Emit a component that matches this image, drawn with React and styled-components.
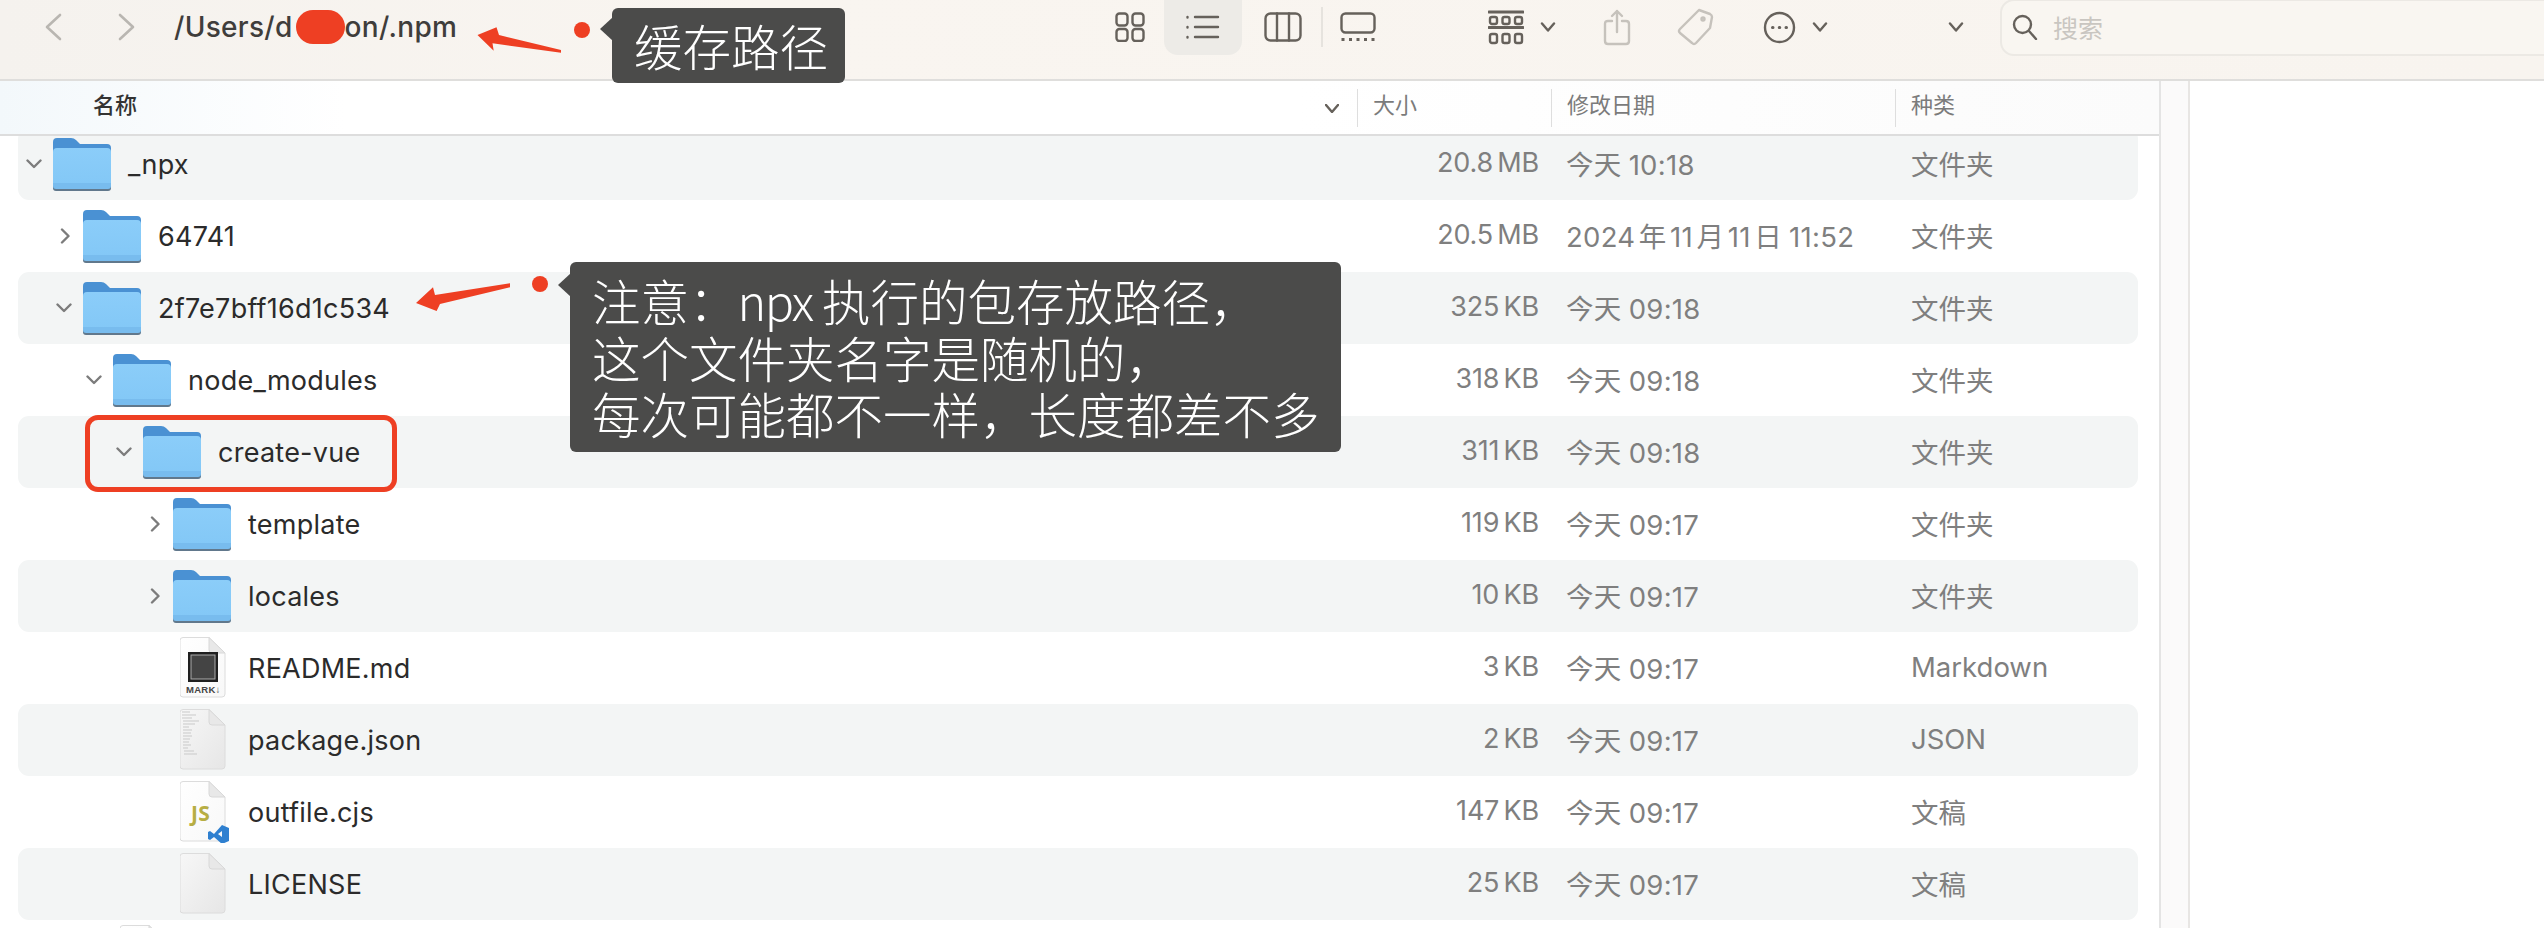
import React from 'react';
import styled, { createGlobalStyle } from 'styled-components';

const RED = '#ee3f23';
const CJK = '"Noto Sans CJK SC"';

const GlobalStyle = createGlobalStyle`
  html, body {
    margin: 0;
    padding: 0;
    background: #fff;
  }
  body {
    font-family: Inter, ${CJK}, sans-serif;
  }
`;

const Page = styled.div`
  position: relative;
  width: 2544px;
  height: 928px;
  overflow: hidden;
  background: #fff;
`;

/* toolbar */
const Toolbar = styled.div`
  display: flex;
  align-items: center;
  box-sizing: border-box;
  height: 81px;
  padding-bottom: 25px;
  background: linear-gradient(90deg, #f5f2ee 0%, #f9f5f0 30%, #f8f4ef 100%);
  border-bottom: 2px solid #dfdedc;
`;

const NavArea = styled.div`
  display: flex;
  align-items: center;
  flex: 0 0 1115px;
  padding-left: 45px;
  box-sizing: border-box;
`;

const NavButton = styled.svg`
  flex: none;
  width: 17px;
  height: 28px;
  margin-right: ${(p) => p.$mr}px;
  fill: none;
  stroke: #b9b6b1;
  stroke-width: 2.6;
  stroke-linecap: round;
  stroke-linejoin: round;
`;

const PathText = styled.div`
  display: flex;
  align-items: center;
  font-size: 28px;
  font-weight: 500;
  letter-spacing: 0.3px;
  color: #3f3d3b;
  white-space: nowrap;
`;

const RedactBlob = styled.span`
  display: inline-block;
  width: 49px;
  height: 34px;
  margin: 0 0 0 ${(p) => p.$gap}px;
  border-radius: 17px;
  background: ${RED};
`;

const Tool = styled.svg`
  flex: none;
  width: ${(p) => p.$w}px;
  height: ${(p) => p.$h}px;
  margin-left: ${(p) => p.$ml || 0}px;
  fill: none;
  stroke: ${(p) => (p.$dim ? '#c6c2bc' : '#66615b')};
  stroke-width: 2.4;
  stroke-linecap: round;
  stroke-linejoin: round;
`;

const ActiveTool = styled.div`
  display: flex;
  align-items: center;
  justify-content: center;
  flex: none;
  width: 78px;
  height: 56px;
  margin-left: 19px;
  background: #edebe7;
  border-radius: 0 0 14px 14px;
`;

const Separator = styled.div`
  flex: none;
  width: 2px;
  height: 40px;
  margin-left: 19px;
  background: #e6e3de;
`;

const SearchBox = styled.div`
  display: flex;
  align-items: center;
  flex: 1;
  height: 53px;
  margin: 0 -20px 0 36px;
  padding-left: 10px;
  border: 2px solid #ece9e4;
  border-radius: 14px;
  background: #f9f6f1;
`;

const SearchLabel = styled.span`
  margin-left: 15px;
  font-size: 25px;
  color: #c9c6c1;
`;

/* table */
const Content = styled.div`
  display: flex;
  height: 847px;
`;

const TablePane = styled.div`
  display: flex;
  flex-direction: column;
  flex: 0 0 2159px;
  min-width: 0;
`;

const HeaderRow = styled.div`
  display: grid;
  grid-template-columns: 1357px 194px 344px 1fr;
  align-items: center;
  box-sizing: border-box;
  height: 55px;
  flex: none;
  background: linear-gradient(90deg, #f3f8fb 0%, #ffffff 16%, #ffffff 60%, #fbfbfb 100%);
  border-bottom: 2px solid #dddddd;
`;

const NameHeader = styled.div`
  display: flex;
  align-items: flex-start;
  justify-content: space-between;
  height: 38px;
  padding: 0 18px 0 93px;
  font-size: 22px;
  font-weight: 500;
  line-height: 32px;
  color: #333;

  svg {
    margin-top: 15px;
  }
`;

const ColumnHeader = styled.div`
  height: 38px;
  padding-left: 15px;
  border-left: 1px solid #dedede;
  font-size: 22px;
  line-height: 32px;
  color: #7b7b7b;
`;

const RowList = styled.div`
  flex: 1;
  min-height: 0;
  overflow: hidden;
`;

const RowStack = styled.div`
  margin: -8px 21px 0 18px;
`;

const Row = styled.div`
  display: grid;
  grid-template-columns: 1339px 182px 372px 1fr;
  align-items: center;
  height: 72px;
  border-radius: 11px;
  background: ${(p) => (p.$striped ? '#f3f5f5' : 'transparent')};
`;

const NameCell = styled.div`
  display: flex;
  align-items: center;
  padding-left: ${(p) => 8 + p.$level * 30}px;
  font-size: 27px;
  letter-spacing: 0.25px;
  color: #2b2b2b;
`;

const ChevronSlot = styled.svg`
  flex: none;
  width: 16px;
  height: 16px;
  margin-right: 11px;
  fill: none;
  stroke: #7c7c7c;
  stroke-width: 2.4;
  stroke-linecap: round;
  stroke-linejoin: round;
`;

const IconSlot = styled.div`
  display: flex;
  justify-content: center;
  flex: none;
  width: 58px;
  margin-right: 17px;
`;

const SizeCell = styled.div`
  padding-bottom: 3px;
  font-size: 27px;
  letter-spacing: -0.2px;
  word-spacing: -3px;
  text-align: right;
  color: #7f7f7f;
`;

const DateCell = styled.div`
  padding: 0 0 3px 27px;
  font-size: 27.5px;
  letter-spacing: 0.3px;
  word-spacing: -1px;
  text-autospace: normal;
  color: #7f7f7f;
`;

const KindCell = styled.div`
  padding-bottom: 3px;
  font-size: 27.5px;
  color: #7f7f7f;
`;

const ScrollTrack = styled.div`
  flex: 0 0 27px;
  background: #fbfafa;
  border-left: 2px solid #e4e4e4;
  border-right: 2px solid #e8e6e4;
`;

/* annotations lying over the window */
const Callout = styled.div`
  position: absolute;
  left: ${(p) => p.$left}px;
  top: ${(p) => p.$top}px;
  box-sizing: border-box;
  padding: ${(p) => p.$pad};
  background: #4b4b4a;
  border-radius: 6px;
  color: #fff;
  font-family: ${CJK}, sans-serif;
  font-size: 48.5px;
  font-weight: 300;
  white-space: pre;
  line-height: ${(p) => p.$lh}px;

  &::before {
    content: '';
    position: absolute;
    left: -12px;
    top: ${(p) => p.$notch}px;
    border-top: 12px solid transparent;
    border-bottom: 12px solid transparent;
    border-right: 13px solid #4b4b4a;
  }
`;

const NarrowLatin = styled.span`
  letter-spacing: -1.5px;
`;

const RedDot = styled.div`
  position: absolute;
  left: ${(p) => p.$left}px;
  top: ${(p) => p.$top}px;
  width: 16px;
  height: 16px;
  border-radius: 50%;
  background: ${RED};
`;

const ArrowMark = styled.svg`
  position: absolute;
  left: ${(p) => p.$left}px;
  top: ${(p) => p.$top}px;
  fill: ${RED};
`;

const HighlightBox = styled.div`
  position: absolute;
  left: 85px;
  top: 415px;
  width: 312px;
  height: 77px;
  box-sizing: border-box;
  border: 5px solid ${RED};
  border-radius: 13px;
`;

const Chevron = ({ open }) => (
  <ChevronSlot viewBox="0 0 16 16">
    {open ? <path d="M1.500 4.500 8 11l6.500-6.500" /> : <path d="M6 1.500 12.500 8 6 14.500" />}
  </ChevronSlot>
);

const Folder = () => (
  <svg width="58" height="53" viewBox="0 0 58 53">
    <defs>
      <linearGradient id="folderFront" x1="0" y1="0" x2="0" y2="1">
        <stop offset="0" stopColor="#8bcdf9" />
        <stop offset="1" stopColor="#82c7f6" />
      </linearGradient>
    </defs>
    <path d="M0 50V4q0-4 4-4h14q3 0 5 2l4 4h27q4 0 4 4v40z" fill="#4a91d3" />
    <path d="M0 14q0-4 4-4h50q4 0 4 4v35q0 3-3 3H3q-3 0-3-3z" fill="url(#folderFront)" />
    <path d="M0 45h58v4q0 3-3 3H3q-3 0-3-3z" fill="#78bcee" />
    <path d="M0 48q0 3 3 3h52q3 0 3-3v2q0 3-3 3H3q-3 0-3-3z" fill="#61788c" />
  </svg>
);

const FileIcon = ({ kind }) => (
  <svg width="50" height="62" viewBox="0 0 50 62" style={{ marginLeft: 5 }}>
    <defs>
      <linearGradient id={`page-${kind}`} x1="0" y1="0" x2="1" y2="1">
        <stop offset="0" stopColor={kind === 'blank' || kind === 'json' ? '#f7f7f7' : '#ffffff'} />
        <stop offset="1" stopColor={kind === 'blank' || kind === 'json' ? '#e6e6e6' : '#f8f8f8'} />
      </linearGradient>
    </defs>
    <path d="M3 .5h26L45 16v41q0 3-3 3H3q-3 0-3-3V3.500q0-3 3-3z" fill={`url(#page-${kind})`} stroke="#dcdcdc" />
    <path d="M29 .5V13q0 3 3 3h13z" fill="#e8e8e8" stroke="#d8d8d8" />
    {kind === 'md' && (
      <>
        <rect x="8" y="15" width="30" height="30" fill="#1f1f1f" />
        <rect x="11" y="18" width="24" height="24" fill="#444" stroke="#aaa" strokeWidth="1" />
        <text x="6" y="56" fontSize="9.500" fontWeight="600" fill="#444" fontFamily="Liberation Sans, sans-serif">MARK↓</text>
      </>
    )}
    {kind === 'json' && (
      <path
        d="M2 3h8M2 6h14M2 9h10M3 12h16M3 15h12M3 18h6M3 21h9M3 24h8M3 27h9M3 30h7M3 33h6M3 36h8M3 39h5M4 42h10M4 45h13"
        stroke="#c9c9c9"
        strokeWidth="1"
      />
    )}
    {kind === 'js' && (
      <>
        <text x="11" y="40" fontSize="21" fontWeight="700" fill="#b7ae44" fontFamily="Open Sans, sans-serif">JS</text>
        <path d="M42 44l7 3v13l-7 3-8-7-4 3-2-1v-7l2-1 4 3zm0 6l-4 3 4 3z" fill="#2f80d0" fillRule="evenodd" />
      </>
    )}
  </svg>
);

const rows = [
  { name: '_npx', level: 0, open: true, size: '20.8 MB', date: '今天 10:18', kind: '文件夹' },
  { name: '64741', level: 1, open: false, size: '20.5 MB', date: '2024年11月11日 11:52', kind: '文件夹' },
  { name: '2f7e7bff16d1c534', level: 1, open: true, size: '325 KB', date: '今天 09:18', kind: '文件夹' },
  { name: 'node_modules', level: 2, open: true, size: '318 KB', date: '今天 09:18', kind: '文件夹' },
  { name: 'create-vue', level: 3, open: true, size: '311 KB', date: '今天 09:18', kind: '文件夹' },
  { name: 'template', level: 4, open: false, size: '119 KB', date: '今天 09:17', kind: '文件夹' },
  { name: 'locales', level: 4, open: false, size: '10 KB', date: '今天 09:17', kind: '文件夹' },
  { name: 'README.md', level: 4, file: 'md', size: '3 KB', date: '今天 09:17', kind: 'Markdown' },
  { name: 'package.json', level: 4, file: 'json', size: '2 KB', date: '今天 09:17', kind: 'JSON' },
  { name: 'outfile.cjs', level: 4, file: 'js', size: '147 KB', date: '今天 09:17', kind: '文稿' },
  { name: 'LICENSE', level: 4, file: 'blank', size: '25 KB', date: '今天 09:17', kind: '文稿' },
  { name: '', level: 2, file: 'blank2' },
];

const SmallChevron = ({ ml }) => (
  <Tool $w={16} $h={10} $ml={ml} viewBox="0 0 16 10" strokeWidth="3">
    <path d="M2 1.500 8 8.500l6-7" />
  </Tool>
);

export default function App() {
  return (
    <Page>
      <GlobalStyle />
      <Toolbar>
        <NavArea>
          <NavButton viewBox="0 0 17 28" $mr={56}>
            <path d="M15 2 2 14l13 12" />
          </NavButton>
          <NavButton viewBox="0 0 17 28" $mr={39}>
            <path d="M2 2l13 12L2 26" />
          </NavButton>
          <PathText>
            /Users/d
            <RedactBlob $gap={3} />
            on/.npm
          </PathText>
        </NavArea>

        <Tool $w={30} $h={30} viewBox="0 0 30 30">
          <rect x="1.500" y="1.500" width="11" height="12" rx="3" />
          <rect x="17.500" y="1.500" width="11" height="12" rx="3" />
          <rect x="1.500" y="17" width="11" height="12" rx="3" />
          <rect x="17.500" y="17" width="11" height="12" rx="3" />
        </Tool>
        <ActiveTool>
          <Tool $w={34} $h={24} viewBox="0 0 34 24" strokeWidth="3">
            <path d="M1.500 2v.5M1.500 12v.5M1.500 22v.5M9 2h23M9 12h23M9 22h23" />
          </Tool>
        </ActiveTool>
        <Tool $w={38} $h={30} $ml={22} viewBox="0 0 38 30">
          <rect x="1.500" y="1.500" width="35" height="27" rx="5" />
          <path d="M13 1.500v27M25 1.500v27" />
        </Tool>
        <Separator />
        <Tool $w={36} $h={30} $ml={17} viewBox="0 0 36 30">
          <rect x="1.500" y="1.500" width="33" height="19" rx="4" />
          <path d="M3 26v3M10.500 26v3M18 26v3M25.500 26v3M33 26v3" strokeWidth="3" strokeLinecap="butt" />
        </Tool>
        <Tool $w={36} $h={35} $ml={112} viewBox="0 0 36 35">
          <path d="M1 2h34M1 17.500h34" strokeWidth="3" />
          <rect x="2" y="7" width="7" height="7" rx="2" />
          <rect x="14.500" y="7" width="7" height="7" rx="2" />
          <rect x="27" y="7" width="7" height="7" rx="2" />
          <rect x="2" y="24" width="7" height="9" rx="2" />
          <rect x="14.500" y="24" width="7" height="9" rx="2" />
          <rect x="27" y="24" width="7" height="9" rx="2" />
        </Tool>
        <SmallChevron ml={16} />
        <Tool $dim $w={28} $h={37} $ml={47} viewBox="0 0 28 37">
          <path d="M9 12H5q-3 0-3 3v17q0 3 3 3h18q3 0 3-3V15q0-3-3-3h-4M14 23V2M9 7l5-5 5 5" />
        </Tool>
        <Tool $dim $w={37} $h={38} $ml={46} viewBox="0 0 37 38">
          <path d="M22 2 33 6q2 1 2 3l-2 11-14 15q-2 2-4 0L3 25q-2-2 0-4z" />
          <circle cx="26" cy="11" r="1.500" />
        </Tool>
        <Tool $w={33} $h={33} $ml={49} viewBox="0 0 33 33">
          <circle cx="16.500" cy="16.500" r="14.500" />
          <path d="M9.500 16.500h.5M16.250 16.500h.5M23 16.500h.5" strokeWidth="3" />
        </Tool>
        <SmallChevron ml={16} />
        <SmallChevron ml={120} />
        <SearchBox>
          <Tool $w={26} $h={26} viewBox="0 0 26 26">
            <circle cx="10.500" cy="10.500" r="8.500" />
            <path d="M17 17l7 8" />
          </Tool>
          <SearchLabel>搜索</SearchLabel>
        </SearchBox>
      </Toolbar>

      <Content>
        <TablePane>
          <HeaderRow>
            <NameHeader>
              名称
              <Tool $w={14} $h={9} viewBox="0 0 14 9" strokeWidth="1.600">
                <path d="M1 1l6 7 6-7" />
              </Tool>
            </NameHeader>
            <ColumnHeader>大小</ColumnHeader>
            <ColumnHeader>修改日期</ColumnHeader>
            <ColumnHeader>种类</ColumnHeader>
          </HeaderRow>
          <RowList>
            <RowStack>
              {rows.map((row, i) => (
                <Row key={i} $striped={i % 2 === 0}>
                  <NameCell $level={row.level}>
                    {row.file ? <ChevronSlot as="span" /> : <Chevron open={row.open} />}
                    <IconSlot>{row.file ? <FileIcon kind={row.file} /> : <Folder />}</IconSlot>
                    {row.name}
                  </NameCell>
                  <SizeCell>{row.size}</SizeCell>
                  <DateCell>{row.date}</DateCell>
                  <KindCell>{row.kind}</KindCell>
                </Row>
              ))}
            </RowStack>
          </RowList>
        </TablePane>
        <ScrollTrack />
      </Content>

      <ArrowMark $left={477} $top={26} width="86" height="28" viewBox="0 0 86 28">
        <path d="M.5 9 19.500 1.300 22 9l62 15v2.700L15.500 17.300l1.200 7.400z" />
      </ArrowMark>
      <RedDot $left={574} $top={22} />
      <Callout $left={612} $top={8} $pad="0 17px 0 22px" $lh={75} $notch={9}>缓存路径</Callout>

      <ArrowMark $left={416} $top={283} width="95" height="29" viewBox="0 0 95 29">
        <path d="M0 20 17 4.300 19 12l75-11.700v4L24 21l-3.400 7z" />
      </ArrowMark>
      <RedDot $left={532} $top={276} />
      <Callout $left={570} $top={262} $pad="10px 21px 10px 22px" $lh={56.5} $notch={11}>
        {'注意\uFF1A'}
        <NarrowLatin>npx </NarrowLatin>
        {'执行的包存放路径\uFF0C\n这个文件夹名字是随机的\uFF0C\n每次可能都不一样\uFF0C长度都差不多'}
      </Callout>

      <HighlightBox />
    </Page>
  );
}
